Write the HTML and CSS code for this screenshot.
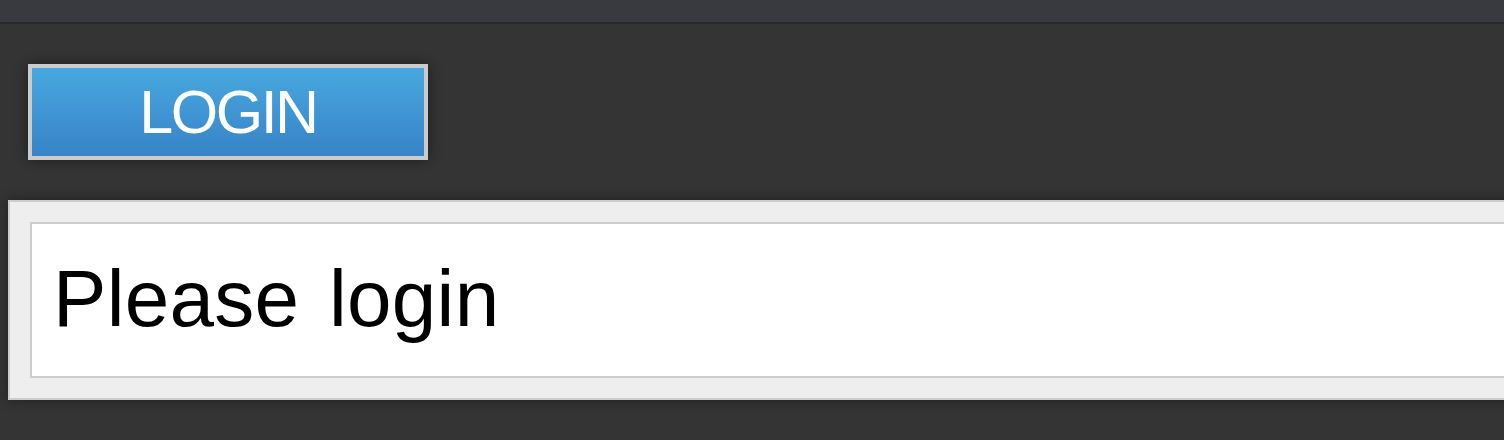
FILE: index.html
```html
<!DOCTYPE html>
<html lang="en">
<head>
<meta charset="utf-8">
<title>Login</title>
<link rel="stylesheet" href="styles.css">
</head>
<body>
<div class="topbar"></div>
<main class="content">
  <div class="actions">
    <button class="login-btn" type="button">LOGIN</button>
  </div>
  <section class="panel">
    <div class="message">Please login</div>
  </section>
</main>
</body>
</html>
```
FILE: styles.css
```css
html, body {
  margin: 0;
  padding: 0;
  overflow: hidden;
  background: #343434;
  height: 440px;
}
body {
  font-family: "Liberation Sans", Arial, sans-serif;
}
.topbar {
  height: 22px;
  background: #383a3f;
  border-bottom: 2px solid #292929;
}
.content {
  display: flex;
  flex-direction: column;
  padding-top: 40px;
  gap: 40px;
}
.actions {
  padding-left: 28px;
  display: flex;
}
.login-btn {
  box-sizing: border-box;
  width: 400px;
  height: 96px;
  border: 4px solid #cbcbcb;
  background: linear-gradient(to bottom, #48a8de, #3783c8);
  color: #ffffff;
  font-family: "Liberation Sans", Arial, sans-serif;
  font-size: 61px;
  letter-spacing: -2.5px;
  padding: 0;
  margin: 0;
  line-height: 88px;
  box-shadow: 0 0 12px rgba(0, 0, 0, 0.45);
  display: flex;
  align-items: center;
  justify-content: center;
}
.panel {
  box-sizing: border-box;
  margin-left: 8px;
  width: 1540px;
  height: 200px;
  background: #eeeeee;
  border: 2px solid #cccccc;
  padding: 20px;
  box-shadow: 0 0 12px rgba(0, 0, 0, 0.4);
  flex-shrink: 0;
}
.message {
  box-sizing: border-box;
  height: 156px;
  background: #ffffff;
  border: 2px solid #cccccc;
  padding-left: 21px;
  padding-bottom: 3px;
  display: flex;
  align-items: center;
  color: #000000;
  font-size: 80px;
  word-spacing: 7px;
  letter-spacing: 0.3px;
}
```
